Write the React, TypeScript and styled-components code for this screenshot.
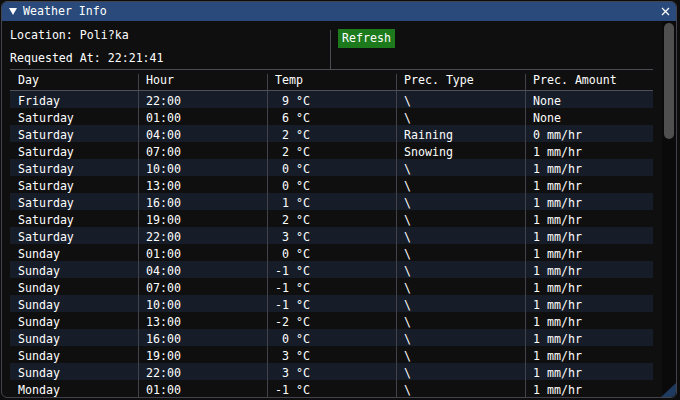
import * as React from 'react';
import styled, { createGlobalStyle } from 'styled-components';

const GlobalStyle = createGlobalStyle`
  html, body {
    margin: 0;
    padding: 0;
    background: #0d0d0d;
  }
  body {
    font-family: "DejaVu Sans Mono", "Liberation Mono", monospace;
    font-size: 11.6px;
    color: #ffffff;
  }
  * { box-sizing: border-box; }
`;

const Window = styled.div`
  position: relative;
  width: 676px;
  height: 397px;
  margin: 1px 0 0 1px;
  border: 1px solid #43434d;
  border-radius: 6px;
  background: #0f0f0f;
  overflow: hidden;
  display: flex;
  flex-direction: column;
`;

const TitleBar = styled.div`
  flex: none;
  height: 19px;
  display: flex;
  align-items: center;
  padding: 0 6px 0 7px;
  background: #294a7a;
  line-height: 19px;
`;

const Title = styled.span`
  margin-left: 6px;
`;

const CloseIcon = styled.svg`
  margin-left: auto;
`;

const Body = styled.div`
  flex: 1;
  min-height: 0;
  display: flex;
`;

const Content = styled.div`
  flex: 1;
  min-width: 0;
  padding: 8px 9px 0 8px;
  overflow: hidden;
`;

const Scrollbar = styled.div`
  flex: none;
  width: 14px;
  padding: 2px;
  background: #0a0a0a;
`;

const ScrollGrab = styled.div`
  height: 116px;
  border-radius: 5px;
  background: #4f4f4f;
`;

const TopSection = styled.div`
  display: grid;
  grid-template-columns: 320px 1px auto;
  height: 40px;
`;

const InfoLine = styled.div<{ $gap?: number }>`
  line-height: 13px;
  margin-top: ${p => p.$gap ?? 0}px;
`;

const VSeparator = styled.div`
  margin-top: 1px;
  background: #4b4b55;
`;

const RefreshButton = styled.button`
  justify-self: start;
  margin-left: 7px;
  width: 57px;
  height: 19px;
  padding: 0 4px;
  border: none;
  background: #1c7a1c;
  color: #ffffff;
  font: inherit;
  line-height: 19px;
  text-align: left;
`;

const HSeparator = styled.div`
  height: 1px;
  background: #4b4b55;
`;

const Table = styled.div`
  margin-top: 4px;
`;

const Columns = '128px 129px 129px 129px 128px';

const HeaderRow = styled.div`
  display: grid;
  grid-template-columns: ${Columns};
  height: 17px;
  border-bottom: 1px solid #4f4f59;
`;

const Row = styled.div<{ $alt: boolean }>`
  display: grid;
  grid-template-columns: ${Columns};
  height: 17px;
  background: ${p => (p.$alt ? '#161d28' : 'transparent')};
`;

const Cell = styled.div<{ $head?: boolean }>`
  padding: ${p => (p.$head ? 0 : 4)}px 0 0 8px;
  line-height: 13px;
  white-space: pre;
  & + & {
    border-left: 1px solid #42424a;
    padding-left: 7px;
  }
`;

const ResizeGrip = styled.svg`
  position: absolute;
  right: 0;
  bottom: 0;
`;

type Forecast = [string, string, number, string, string];

const rows: Forecast[] = [
  ['Friday', '22:00', 9, '\\', 'None'],
  ['Saturday', '01:00', 6, '\\', 'None'],
  ['Saturday', '04:00', 2, 'Raining', '0 mm/hr'],
  ['Saturday', '07:00', 2, 'Snowing', '1 mm/hr'],
  ['Saturday', '10:00', 0, '\\', '1 mm/hr'],
  ['Saturday', '13:00', 0, '\\', '1 mm/hr'],
  ['Saturday', '16:00', 1, '\\', '1 mm/hr'],
  ['Saturday', '19:00', 2, '\\', '1 mm/hr'],
  ['Saturday', '22:00', 3, '\\', '1 mm/hr'],
  ['Sunday', '01:00', 0, '\\', '1 mm/hr'],
  ['Sunday', '04:00', -1, '\\', '1 mm/hr'],
  ['Sunday', '07:00', -1, '\\', '1 mm/hr'],
  ['Sunday', '10:00', -1, '\\', '1 mm/hr'],
  ['Sunday', '13:00', -2, '\\', '1 mm/hr'],
  ['Sunday', '16:00', 0, '\\', '1 mm/hr'],
  ['Sunday', '19:00', 3, '\\', '1 mm/hr'],
  ['Sunday', '22:00', 3, '\\', '1 mm/hr'],
  ['Monday', '01:00', -1, '\\', '1 mm/hr'],
];

const fmtTemp = (t: number) => `${String(t).padStart(2, ' ')} °C`;

export default function App() {
  return (
    <>
      <GlobalStyle />
      <Window>
        <TitleBar>
          <svg width="8" height="7" viewBox="0 0 8 7">
            <polygon points="0,0 8,0 4,7" fill="#ffffff" />
          </svg>
          <Title>Weather Info</Title>
          <CloseIcon width="9" height="9" viewBox="0 0 9 9">
            <path d="M1 1 L8 8 M8 1 L1 8" stroke="#ffffff" strokeWidth="1.2" />
          </CloseIcon>
        </TitleBar>
        <Body>
          <Content>
            <TopSection>
              <div>
                <InfoLine>Location: Poli?ka</InfoLine>
                <InfoLine $gap={10}>Requested At: 22:21:41</InfoLine>
              </div>
              <VSeparator />
              <RefreshButton>Refresh</RefreshButton>
            </TopSection>
            <HSeparator />
            <Table>
              <HeaderRow>
                <Cell $head>Day</Cell>
                <Cell $head>Hour</Cell>
                <Cell $head>Temp</Cell>
                <Cell $head>Prec. Type</Cell>
                <Cell $head>Prec. Amount</Cell>
              </HeaderRow>
              {rows.map(([day, hour, temp, type, amount], i) => (
                <Row key={i} $alt={i % 2 === 0}>
                  <Cell>{day}</Cell>
                  <Cell>{hour}</Cell>
                  <Cell>{fmtTemp(temp)}</Cell>
                  <Cell>{type}</Cell>
                  <Cell>{amount}</Cell>
                </Row>
              ))}
            </Table>
          </Content>
          <Scrollbar>
            <ScrollGrab />
          </Scrollbar>
        </Body>
        <ResizeGrip width="15" height="14" viewBox="0 0 15 14">
          <path d="M15 0 L15 9 Q15 14 10 14 L0 14 Z" fill="#1e3a5f" />
        </ResizeGrip>
      </Window>
    </>
  );
}
